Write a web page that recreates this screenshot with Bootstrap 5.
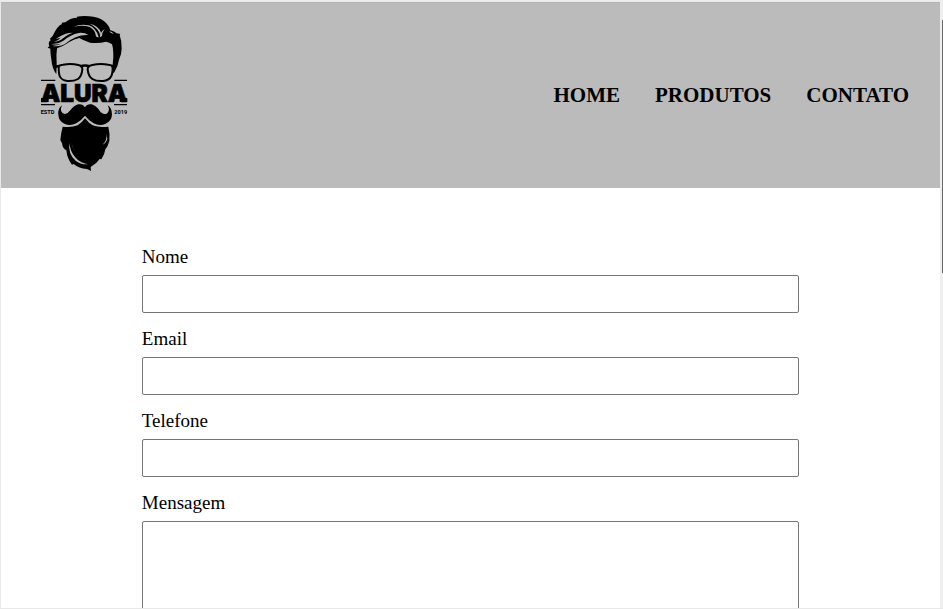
<!DOCTYPE html>
<html lang="pt-br">
<head>
<meta charset="utf-8">
<meta name="viewport" content="width=device-width, initial-scale=1">
<title>Contato - Barbearia Alura</title>
<link href="https://cdn.jsdelivr.net/npm/bootstrap@5.3.0/dist/css/bootstrap.min.css" rel="stylesheet">
<style>
html,body{height:100%}
body{font-family:"Liberation Serif","Times New Roman",serif;color:#000;background:#fff}
.frame{border:1px solid #e8e8e8;border-top:2px solid #ececec;border-right:0}
.page-area{min-width:0}
.site-head{background:#bbb;border-top:1px solid #b2b2b2;padding:2px 31px 8px 29px}
.logo{width:110px;height:175px}
.menu{gap:35px;font-size:21px;line-height:24px}
.menu a{color:#000}
.form-box{width:70%;padding-top:57px}
.form-box label{font-size:19px;line-height:24px;margin-bottom:6px}
.form-box .form-control{height:38px;border:1px solid #767676;border-radius:2px;margin-bottom:14px;font-family:inherit;font-size:19px;color:#000}
.form-box textarea.form-control{height:220px;resize:none}
.scroll-track{width:3px;background:#efefef;padding-top:18px}
.scroll-thumb{width:1px;height:253px;background:#686868}
</style>
<script src="https://cdn.jsdelivr.net/npm/bootstrap@5.3.0/dist/js/bootstrap.bundle.min.js" defer></script>
</head>
<body>
<div class="frame d-flex vh-100 overflow-hidden">
<div class="page-area flex-grow-1 overflow-hidden">
<header class="site-head d-flex justify-content-between align-items-center">
<a href="#" aria-label="Alura" class="d-block">
<svg class="logo d-block" viewBox="0 0 330 525" role="img" aria-label="Alura, estd 2019">
<!-- hair -->
<path d="M79 208Q66 190 64 163Q61 146 61 131L53 128L58 123Q53 112 62 106L60 101Q69 95 72 85Q83 63 96 57L95 53L106 52Q120 38 142 38L140 35Q163 31 190 35Q218 40 229 55Q240 67 240 75Q254 79 260 85L271 87L269 91Q276 108 275 131Q275 148 267 164Q264 184 253 202L247 206L248 180L250 155Q250 130 246 118Q239 112 228 110Q206 116 180 113Q161 107 148 99Q133 102 118 111Q98 125 81 130Q78 150 80 176Z"/>
<g fill="#bbb">
<path d="M63 117Q82 119 99 108Q123 88 146 84Q163 82 175 90Q154 89 137 97Q121 104 109 114Q91 127 67 123Q84 123 97 115Q82 121 63 117Z"/>
<path d="M72 111Q88 110 99 100Q110 89 128 83Q105 84 91 94Q84 98 78 102Q88 99 92 98Q86 106 72 111Z"/>
<path d="M130 66Q152 55 176 61Q198 68 206 96Q202 98 198 94Q196 75 179 66Q158 59 130 66Z"/>
<path d="M179 56Q206 62 213 83L211 92Q207 70 179 56Z"/>
<path d="M210 97Q208 84 224 72Q216 83 216 93Z"/>
<path d="M237 79Q247 80 251 87Q243 85 237 79Z"/>
</g>
<!-- glasses -->
<g fill="none" stroke="#000" stroke-width="6">
<path d="M86 187Q86 180 99 179Q124 175 145 180Q158 183 157 194Q155 214 144 222Q132 229 112 228Q94 226 89 213Q86 205 86 187Z"/>
<path d="M248 187Q248 180 235 179Q210 175 187 180Q172 183 173 194Q175 214 187 222Q198 229 219 228Q238 226 244 213Q248 205 248 187Z"/>
<path d="M76 185L90 183M258 185L244 183M151 184Q165 179 179 184" stroke-width="8"/>
</g>
<!-- rules -->
<path d="M33 226H76M253 226H291M33 299H75M252 299H291" fill="none" stroke="#000" stroke-width="4"/>
<g font-family="Inter, sans-serif" font-weight="900">
<text x="162" y="290" font-size="73" text-anchor="middle" stroke="#000" stroke-width="2">ALURA</text>
</g>
<path d="M33 279H56V291H33ZM269 279H292V291H269Z"/>
<g font-family="Roboto, sans-serif" font-weight="700" font-size="17">
<text x="32" y="327">ESTD</text><text x="253" y="327">2019</text>
</g>
<!-- moustache -->
<path d="M165 307Q158 296 145 298Q132 301 121 316Q110 331 99 325Q88 318 96 301Q83 310 85 329Q86 348 103 356Q120 364 139 355Q153 347 165 332Q177 347 191 355Q209 364 227 356Q245 347 246 329Q246 309 233 301Q242 318 230 326Q218 331 208 316Q197 301 184 298Q171 296 165 307Z"/>
<!-- beard -->
<path d="M98 365Q123 369 143 361Q155 354 165 340Q177 355 188 361Q208 369 235 365Q240 384 238 408Q234 425 226 433Q224 449 214 463L209 462Q200 476 182 486L183 498Q176 493 170 492Q147 491 131 477L126 479Q112 463 109 436Q98 431 96 415L91 405Q93 383 98 365Z"/>
<g fill="#bbb">
<path d="M118 414Q114 449 137 467Q151 479 174 478Q149 473 135 456Q121 440 118 414Z"/>
<path d="M125 415Q127 431 139 440Q129 434 125 415Z"/>
<path d="M229 386Q232 406 218 419Q228 415 232 402Z"/>
</g>
</svg>
</a>
<nav class="pt-1" aria-label="Principal"><ul class="menu list-unstyled d-flex fw-bold text-uppercase m-0">
<li><a class="text-decoration-none" href="#">Home</a></li>
<li><a class="text-decoration-none" href="#">Produtos</a></li>
<li><a class="text-decoration-none" href="#">Contato</a></li>
</ul></nav>
</header>
<main>
<form class="form-box mx-auto">
<label class="d-block" for="nome">Nome</label>
<input class="form-control" type="text" id="nome">
<label class="d-block" for="email">Email</label>
<input class="form-control" type="email" id="email">
<label class="d-block" for="telefone">Telefone</label>
<input class="form-control" type="tel" id="telefone">
<label class="d-block" for="mensagem">Mensagem</label>
<textarea class="form-control" id="mensagem"></textarea>
</form>
</main>
</div>
<div class="scroll-track d-flex justify-content-end flex-shrink-0" aria-hidden="true"><div class="scroll-thumb"></div></div>
</div>
</body>
</html>
